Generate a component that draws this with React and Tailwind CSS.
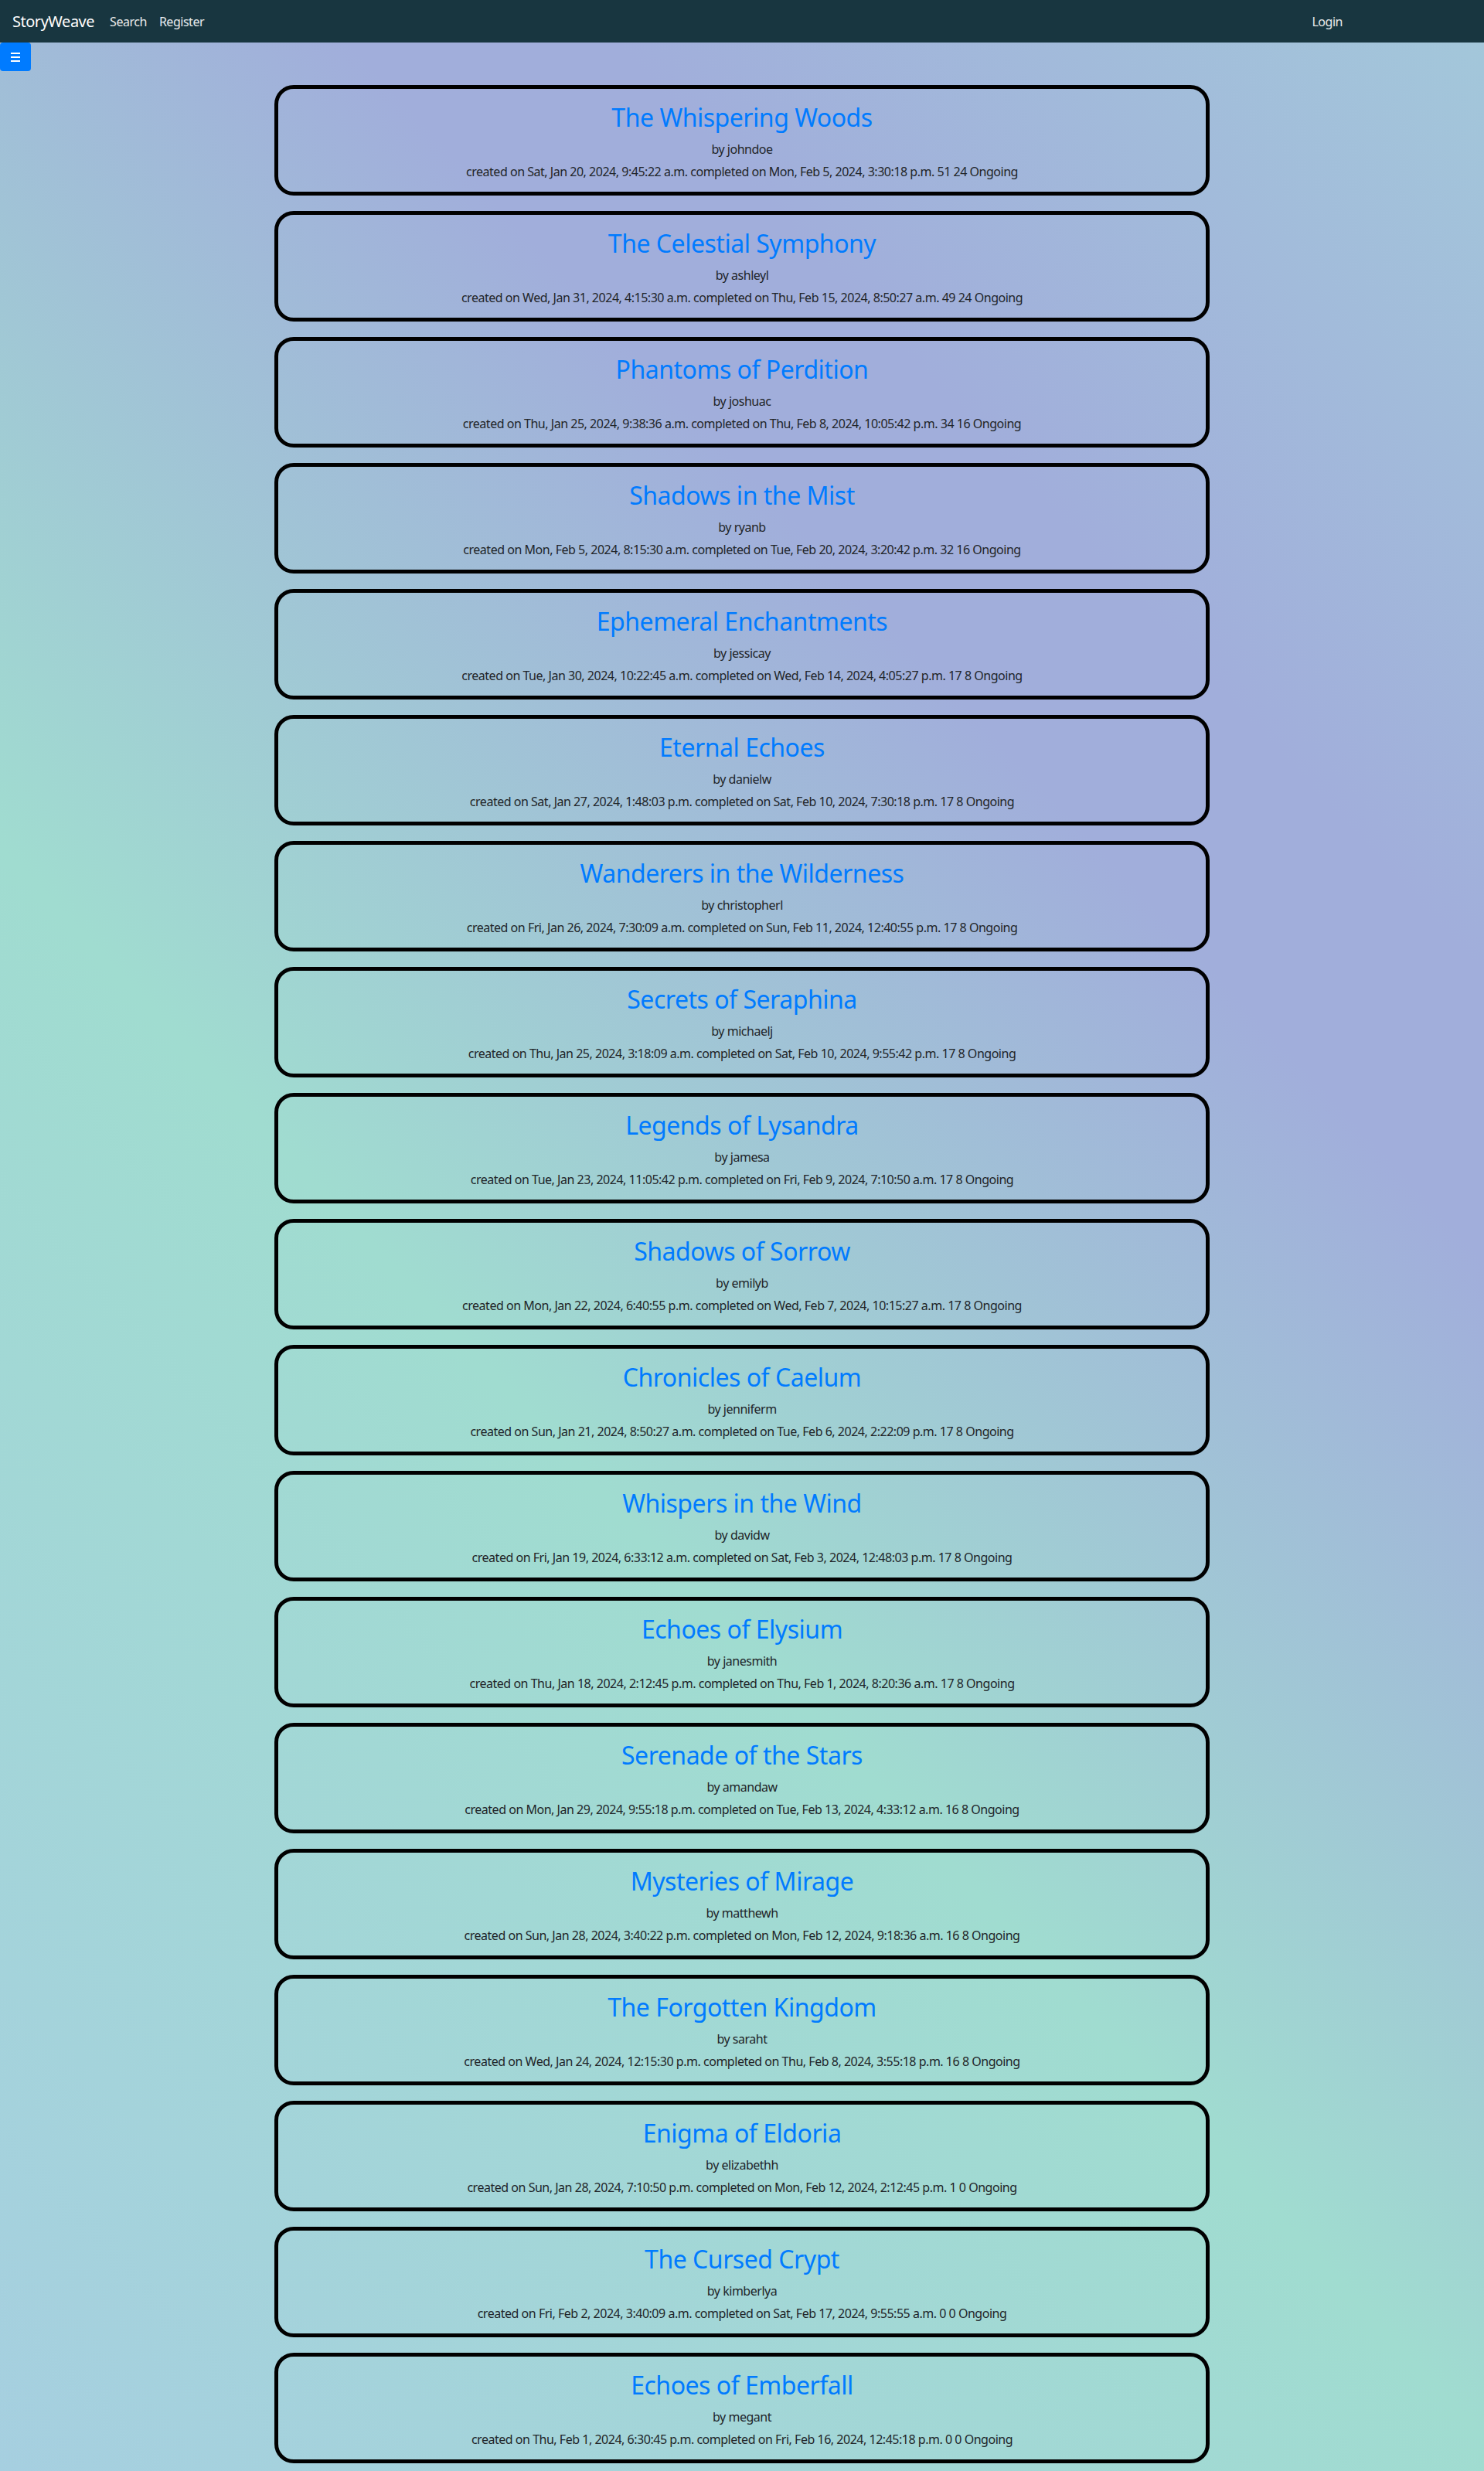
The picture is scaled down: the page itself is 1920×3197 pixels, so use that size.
import { useState } from 'react'

const STORIES = [
  ['The Whispering Woods', 'johndoe', 'Sat, Jan 20, 2024, 9:45:22 a.m.', 'Mon, Feb 5, 2024, 3:30:18 p.m.', '51 24'],
  ['The Celestial Symphony', 'ashleyl', 'Wed, Jan 31, 2024, 4:15:30 a.m.', 'Thu, Feb 15, 2024, 8:50:27 a.m.', '49 24'],
  ['Phantoms of Perdition', 'joshuac', 'Thu, Jan 25, 2024, 9:38:36 a.m.', 'Thu, Feb 8, 2024, 10:05:42 p.m.', '34 16'],
  ['Shadows in the Mist', 'ryanb', 'Mon, Feb 5, 2024, 8:15:30 a.m.', 'Tue, Feb 20, 2024, 3:20:42 p.m.', '32 16'],
  ['Ephemeral Enchantments', 'jessicay', 'Tue, Jan 30, 2024, 10:22:45 a.m.', 'Wed, Feb 14, 2024, 4:05:27 p.m.', '17 8'],
  ['Eternal Echoes', 'danielw', 'Sat, Jan 27, 2024, 1:48:03 p.m.', 'Sat, Feb 10, 2024, 7:30:18 p.m.', '17 8'],
  ['Wanderers in the Wilderness', 'christopherl', 'Fri, Jan 26, 2024, 7:30:09 a.m.', 'Sun, Feb 11, 2024, 12:40:55 p.m.', '17 8'],
  ['Secrets of Seraphina', 'michaelj', 'Thu, Jan 25, 2024, 3:18:09 a.m.', 'Sat, Feb 10, 2024, 9:55:42 p.m.', '17 8'],
  ['Legends of Lysandra', 'jamesa', 'Tue, Jan 23, 2024, 11:05:42 p.m.', 'Fri, Feb 9, 2024, 7:10:50 a.m.', '17 8'],
  ['Shadows of Sorrow', 'emilyb', 'Mon, Jan 22, 2024, 6:40:55 p.m.', 'Wed, Feb 7, 2024, 10:15:27 a.m.', '17 8'],
  ['Chronicles of Caelum', 'jenniferm', 'Sun, Jan 21, 2024, 8:50:27 a.m.', 'Tue, Feb 6, 2024, 2:22:09 p.m.', '17 8'],
  ['Whispers in the Wind', 'davidw', 'Fri, Jan 19, 2024, 6:33:12 a.m.', 'Sat, Feb 3, 2024, 12:48:03 p.m.', '17 8'],
  ['Echoes of Elysium', 'janesmith', 'Thu, Jan 18, 2024, 2:12:45 p.m.', 'Thu, Feb 1, 2024, 8:20:36 a.m.', '17 8'],
  ['Serenade of the Stars', 'amandaw', 'Mon, Jan 29, 2024, 9:55:18 p.m.', 'Tue, Feb 13, 2024, 4:33:12 a.m.', '16 8'],
  ['Mysteries of Mirage', 'matthewh', 'Sun, Jan 28, 2024, 3:40:22 p.m.', 'Mon, Feb 12, 2024, 9:18:36 a.m.', '16 8'],
  ['The Forgotten Kingdom', 'saraht', 'Wed, Jan 24, 2024, 12:15:30 p.m.', 'Thu, Feb 8, 2024, 3:55:18 p.m.', '16 8'],
  ['Enigma of Eldoria', 'elizabethh', 'Sun, Jan 28, 2024, 7:10:50 p.m.', 'Mon, Feb 12, 2024, 2:12:45 p.m.', '1 0'],
  ['The Cursed Crypt', 'kimberlya', 'Fri, Feb 2, 2024, 3:40:09 a.m.', 'Sat, Feb 17, 2024, 9:55:55 a.m.', '0 0'],
  ['Echoes of Emberfall', 'megant', 'Thu, Feb 1, 2024, 6:30:45 p.m.', 'Fri, Feb 16, 2024, 12:45:18 p.m.', '0 0'],
]

function StoryCard({ title, author, created, completed, counts }) {
  return (
    <div className="w-[1210px] mx-auto border-[5px] border-black rounded-[25px] pt-[18px] pb-[14px] text-center">
      <h2 className="text-[32px] leading-[38px] text-[#007bff]">{title}</h2>
      <p className="mt-[10px] text-base leading-6 text-[#212529]">by {author}</p>
      <p className="mt-[5px] text-base leading-6 text-[#212529]">
        created on {created} completed on {completed} {counts} Ongoing
      </p>
    </div>
  )
}

export default function App() {
  const [open, setOpen] = useState(false)

  return (
    <div className="relative min-h-screen font-['Noto_Sans',sans-serif] tracking-[-0.03em] bg-[linear-gradient(47deg,#a6cfe0_0%,#a0dcd0_40%,#a1aedb_69%,#a1aedb_76%,#a3c8da_100%)]">
      {/* Navbar */}
      <nav className="h-[55px] bg-[#183640] flex items-center px-4">
        <span className="text-xl text-white mr-5">StoryWeave</span>
        <a className="text-base text-white/90 mr-4">Search</a>
        <a className="text-base text-white/90">Register</a>
        <a className="ml-auto mr-[167px] text-base text-white/90">Login</a>
      </nav>

      {/* Sidebar toggle */}
      <button
        onClick={() => setOpen(!open)}
        className="absolute left-0 top-[55px] w-10 h-[37px] rounded bg-[#007bff] flex flex-col items-center justify-center gap-[3px]"
      >
        <span className="block w-3 h-[2px] bg-white" />
        <span className="block w-3 h-[2px] bg-white" />
        <span className="block w-3 h-[2px] bg-white" />
      </button>

      {/* Stories */}
      <div className="pt-[55px] pb-[10px] flex flex-col gap-5">
        {STORIES.map(([title, author, created, completed, counts]) => (
          <StoryCard
            key={title}
            title={title}
            author={author}
            created={created}
            completed={completed}
            counts={counts}
          />
        ))}
      </div>
    </div>
  )
}
